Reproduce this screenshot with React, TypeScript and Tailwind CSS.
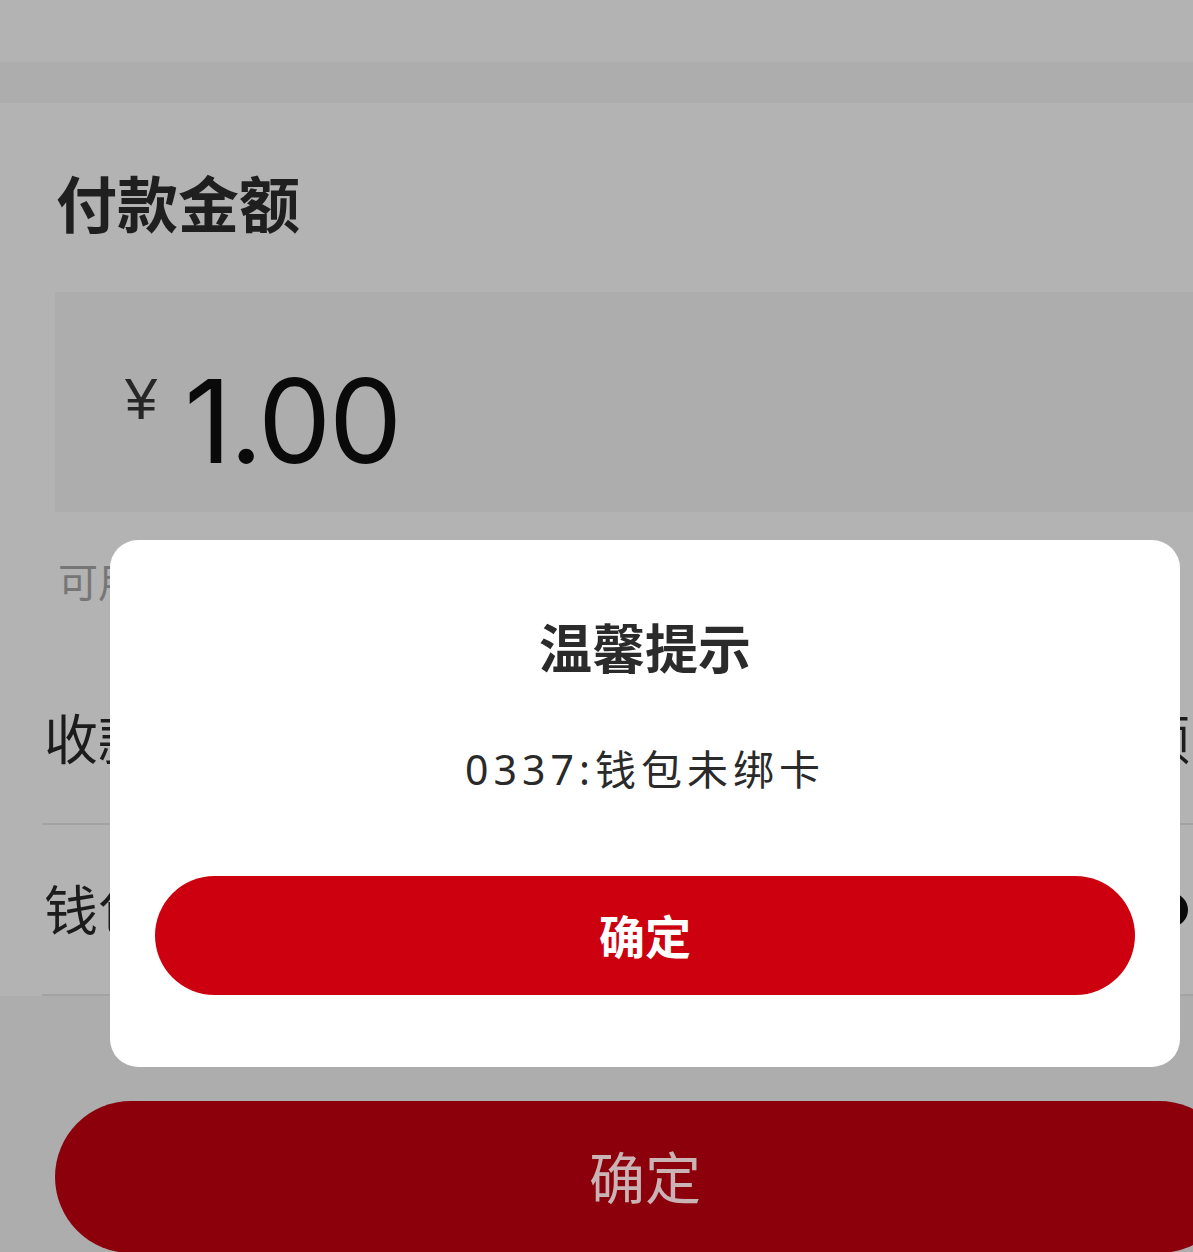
import React from "react";

const FONT = {
  fontFamily: '"Noto Sans", "Noto Sans CJK SC", sans-serif',
};

function Row({
  left,
  right,
}: {
  left: string;
  right: React.ReactNode;
}) {
  return (
    <div className="mx-[42px] h-[171px] flex items-center justify-between border-b-2 border-[#a3a3a3]">
      <span className="pl-[2px] text-[54px] leading-none text-[#1c1c1c]">{left}</span>
      <span className="flex items-center">{right}</span>
    </div>
  );
}

export default function App() {
  return (
    <div className="w-[1193px] h-[1252px] overflow-hidden bg-[#b3b3b3]" style={FONT}>
      <div className="relative w-[1290px] h-[1252px]">
        {/* status bar + nav */}
        <div className="h-[62px] bg-[#b3b3b3]" />
        <div className="h-[41px] bg-[#adadad]" />

        {/* form */}
        <div className="bg-[#b3b3b3]">
          <h1 className="pt-[71px] pl-[56px] text-[61px] leading-none font-bold text-[#1f1f1f]">
            付款金额
          </h1>

          <div className="mx-[55px] mt-[57px] h-[220px] bg-[#adadad] flex items-start pl-[70px] pt-[72px]">
            <span
              className="mt-[6px] text-[58px] leading-none text-[#262626]"
              style={{ fontFamily: '"Liberation Sans", sans-serif' }}
            >
              ¥
            </span>
            <span
              className="ml-[27px] -mt-[1px] text-[116px] leading-none tracking-[-2px] text-[#0a0a0a]"
              style={{ fontFamily: "Inter, sans-serif" }}
            >
              1.00
            </span>
          </div>

          <p className="pt-[50px] pl-[58px] text-[40px] leading-none text-[#767676]">
            可用余额 ¥0.00
          </p>

          <div className="pt-[52px]">
            <Row
              left="收款方"
              right={
                <span className="pr-[58px] text-[54px] leading-none text-[#1c1c1c]">
                  查询余额
                </span>
              }
            />
            <Row
              left="钱包"
              right={<span className="mr-[60px] w-[34px] h-[34px] rounded-full bg-[#0a0a0a]" />}
            />
          </div>
        </div>

        {/* footer */}
        <div className="bg-[#adadad] pt-[105px] px-[55px] h-[300px]">
          <button className="w-full h-[152px] rounded-full bg-[#8b000b] text-[56px] leading-none text-[#c9b3b5]">
            确定
          </button>
        </div>

        {/* dialog */}
        <div className="absolute left-[110px] top-[540px] w-[1070px] h-[527px] bg-white rounded-[28px] flex flex-col items-center pt-[82px]">
          <h2 className="text-[53px] leading-none font-bold text-[#2b2b2b]">温馨提示</h2>
          <p className="mt-[74px] text-[41px] leading-none tracking-[5px] text-[#2a2a2a]">
            0337:钱包未绑卡
          </p>
          <button className="mt-[86px] w-[980px] h-[119px] rounded-full bg-[#cc000e] text-[46px] leading-none font-bold text-white">
            确定
          </button>
        </div>
      </div>
    </div>
  );
}
